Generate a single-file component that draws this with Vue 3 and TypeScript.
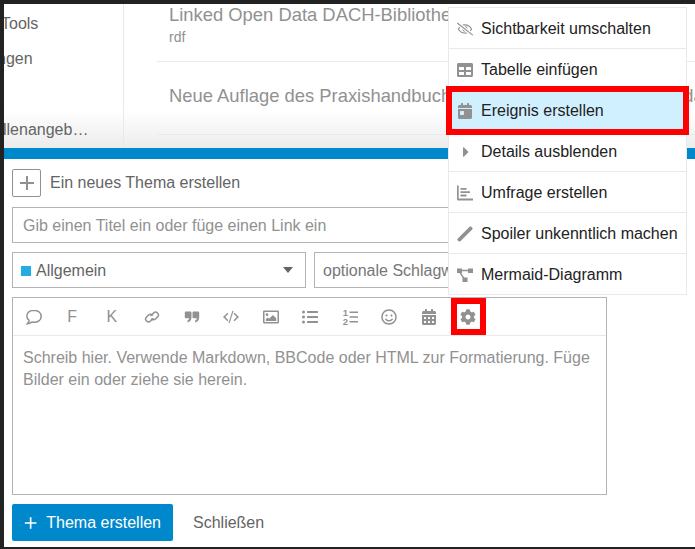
<script setup lang="ts">
import { h } from 'vue'
import type { FunctionalComponent } from 'vue'

interface Glyph {
  box: string
  d: string
  line?: boolean
  evenodd?: boolean
}

const icons: Record<string, Glyph> = {
  comment: { box: '0 0 16 16', line: true, d: 'M8 1.200C3.800 1.200.8 3.700.8 7c0 1.800.9 3.300 2.300 4.400-.2 1.200-.9 2.400-1.800 3.400 1.700-.1 3.300-.8 4.500-1.700.7.1 1.400.2 2.200.2 4.200 0 7.200-2.500 7.200-5.900S12.200 1.200 8 1.200z' },
  link: { box: '0 0 16 16', line: true, d: 'M7 6.500 9.500 4a2.800 2.800 0 0 1 4 4L11.500 10a2.800 2.800 0 0 1-4 0M9 9.500 6.500 12a2.800 2.800 0 0 1-4-4L4.500 6a2.800 2.800 0 0 1 4 0' },
  quote: { box: '0 0 16 16', d: 'M1.800 2.500h4.700a1 1 0 0 1 1 1v5c0 2.600-1.500 4.500-4 5v-2.200c1-.3 1.600-1 1.700-2H1.800a1 1 0 0 1-1-1V3.500a1 1 0 0 1 1-1zM9.500 2.500h4.700a1 1 0 0 1 1 1v5c0 2.600-1.500 4.500-4 5v-2.200c1-.3 1.600-1 1.700-2H9.500a1 1 0 0 1-1-1V3.500a1 1 0 0 1 1-1z' },
  code: { box: '0 0 16 16', d: 'M4.400 3.800l1 1L2.200 8l3.200 3.200-1 1L0 8zM11.600 3.800l-1 1L13.800 8l-3.200 3.200 1 1L16 8zM9.400 1.800l1.100.3-3.900 12.100-1.100-.3z' },
  image: { box: '0 0 16 16', evenodd: true, d: 'M1.200 1.500h13.600c.7 0 1.200.5 1.200 1.200v10.600c0 .7-.5 1.200-1.200 1.200H1.200C.5 14.500 0 14 0 13.300V2.700c0-.7.5-1.200 1.200-1.200zM1.500 3v10h13V3zM4 4.300a1.400 1.400 0 1 1 0 2.800 1.400 1.400 0 0 1 0-2.800zM2.800 12v-1.700l1.900-1.900 1.400 1.400 3.800-3.900 3.300 3.400V12z' },
  listUl: { box: '0 0 512 512', d: 'M48 48a48 48 0 1 0 48 48 48 48 0 0 0-48-48zm0 160a48 48 0 1 0 48 48 48 48 0 0 0-48-48zm0 160a48 48 0 1 0 48 48 48 48 0 0 0-48-48zm448 16H176a16 16 0 0 0-16 16v32a16 16 0 0 0 16 16h320a16 16 0 0 0 16-16v-32a16 16 0 0 0-16-16zm0-320H176a16 16 0 0 0-16 16v32a16 16 0 0 0 16 16h320a16 16 0 0 0 16-16V80a16 16 0 0 0-16-16zm0 160H176a16 16 0 0 0-16 16v32a16 16 0 0 0 16 16h320a16 16 0 0 0 16-16v-32a16 16 0 0 0-16-16z' },
  smile: { box: '0 0 496 512', d: 'M248 8C111 8 0 119 0 256s111 248 248 248 248-111 248-248S385 8 248 8zm0 448c-110.300 0-200-89.700-200-200S137.700 56 248 56s200 89.700 200 200-89.700 200-200 200zm-80-216c17.700 0 32-14.300 32-32s-14.300-32-32-32-32 14.300-32 32 14.300 32 32 32zm160 0c17.700 0 32-14.300 32-32s-14.300-32-32-32-32 14.300-32 32 14.300 32 32 32zm4 72.600c-20.800 25-51.500 39.400-84 39.400s-63.200-14.300-84-39.400c-8.500-10.200-23.700-11.500-33.800-3.100-10.200 8.500-11.500 23.600-3.100 33.800 30 36 74.100 56.600 120.900 56.600s90.900-20.600 120.900-56.600c8.500-10.200 7.100-25.300-3.100-33.800-10.100-8.400-25.300-7.100-33.800 3.100z' },
  calendar: { box: '0 0 448 512', d: 'M0 464c0 26.500 21.500 48 48 48h352c26.500 0 48-21.500 48-48V192H0v272zm320-196c0-6.600 5.400-12 12-12h40c6.600 0 12 5.400 12 12v40c0 6.600-5.400 12-12 12h-40c-6.600 0-12-5.400-12-12v-40zm0 128c0-6.600 5.400-12 12-12h40c6.600 0 12 5.400 12 12v40c0 6.600-5.400 12-12 12h-40c-6.600 0-12-5.400-12-12v-40zM192 268c0-6.600 5.400-12 12-12h40c6.600 0 12 5.400 12 12v40c0 6.600-5.400 12-12 12h-40c-6.600 0-12-5.400-12-12v-40zm0 128c0-6.600 5.400-12 12-12h40c6.600 0 12 5.400 12 12v40c0 6.600-5.400 12-12 12h-40c-6.600 0-12-5.400-12-12v-40zM64 268c0-6.600 5.400-12 12-12h40c6.600 0 12 5.400 12 12v40c0 6.600-5.400 12-12 12H76c-6.600 0-12-5.400-12-12v-40zm0 128c0-6.600 5.400-12 12-12h40c6.600 0 12 5.400 12 12v40c0 6.600-5.400 12-12 12H76c-6.600 0-12-5.400-12-12v-40zM400 64h-48V16c0-8.800-7.200-16-16-16h-32c-8.800 0-16 7.200-16 16v48H160V16c0-8.800-7.200-16-16-16h-32c-8.800 0-16 7.200-16 16v48H48C21.500 64 0 85.500 0 112v48h448v-48c0-26.500-21.500-48-48-48z' },
  cog: { box: '0 0 512 512', d: 'M487.400 315.700l-42.600-24.600c4.300-23.200 4.300-47 0-70.200l42.600-24.600c4.900-2.800 7.100-8.600 5.500-14-11.100-35.600-30-67.800-54.700-94.600-3.800-4.100-10-5.100-14.800-2.300L380.800 110c-17.900-15.400-38.500-27.300-60.800-35.100V25.800c0-5.600-3.900-10.500-9.400-11.700-36.700-8.200-74.300-7.800-109.200 0-5.500 1.200-9.400 6.100-9.400 11.700V75c-22.200 7.900-42.800 19.800-60.800 35.100L88.700 85.500c-4.900-2.800-11-1.900-14.800 2.300-24.700 26.700-43.600 58.900-54.700 94.600-1.700 5.400.6 11.200 5.500 14L67.300 221c-4.300 23.200-4.300 47 0 70.200l-42.600 24.600c-4.900 2.800-7.100 8.600-5.500 14 11.100 35.600 30 67.800 54.700 94.600 3.800 4.100 10 5.100 14.800 2.300l42.600-24.600c17.900 15.400 38.500 27.300 60.800 35.100v49.200c0 5.600 3.900 10.500 9.400 11.700 36.700 8.200 74.300 7.800 109.200 0 5.500-1.200 9.400-6.100 9.400-11.700v-49.200c22.200-7.900 42.800-19.800 60.800-35.100l42.600 24.600c4.900 2.800 11 1.900 14.800-2.300 24.700-26.700 43.600-58.900 54.700-94.600 1.500-5.500-.7-11.300-5.600-14.100zM256 336c-44.100 0-80-35.900-80-80s35.900-80 80-80 80 35.900 80 80-35.900 80-80 80z' },
  eyeSlash: { box: '0 0 640 512', d: 'M634 471L36 3.510A16 16 0 0 0 13.510 6l-10 12.490A16 16 0 0 0 6 41l598 467.490a16 16 0 0 0 22.490-2.490l10-12.490A16 16 0 0 0 634 471zM296.790 146.470l134.790 105.380C429.360 191.910 380.480 144 320 144a112.260 112.260 0 0 0-23.210 2.470zm46.420 219.070L208.420 260.160C210.650 320.090 259.530 368 320 368a113 113 0 0 0 23.210-2.460zM320 112c98.650 0 189.090 55 237.930 144a285.530 285.530 0 0 1-44 60.200l37.740 29.500a333.700 333.700 0 0 0 52.900-75.110 32.350 32.350 0 0 0 0-29.190C550.290 135.590 442.930 64 320 64c-36.700 0-71.710 7-104.630 18.810l46.410 36.290c18.940-4.300 38.340-7.100 58.220-7.100zm0 288c-98.650 0-189.080-55-237.930-144a285.470 285.470 0 0 1 44.050-60.190l-37.740-29.500a333.600 333.600 0 0 0-52.890 75.100 32.350 32.350 0 0 0 0 29.190C89.720 376.410 197.080 448 320 448c36.700 0 71.710-7.050 104.630-18.810l-46.410-36.280C359.280 397.200 339.890 400 320 400z' },
  table: { box: '0 0 512 512', d: 'M464 32H48C21.490 32 0 53.490 0 80v352c0 26.510 21.490 48 48 48h416c26.510 0 48-21.490 48-48V80c0-26.510-21.490-48-48-48zM224 416H64v-96h160v96zm0-160H64v-96h160v96zm224 160H288v-96h160v96zm0-160H288v-96h160v96z' },
  calendarDay: { box: '0 0 448 512', d: 'M0 464c0 26.500 21.500 48 48 48h352c26.500 0 48-21.500 48-48V192H0v272zm64-192c0-8.800 7.200-16 16-16h96c8.800 0 16 7.200 16 16v96c0 8.800-7.200 16-16 16H80c-8.800 0-16-7.200-16-16v-96zM400 64h-48V16c0-8.800-7.200-16-16-16h-32c-8.800 0-16 7.200-16 16v48H160V16c0-8.800-7.200-16-16-16h-32c-8.800 0-16 7.200-16 16v48H48C21.500 64 0 85.500 0 112v48h448v-48c0-26.500-21.500-48-48-48z' },
  caretRight: { box: '-32 0 192 512', d: 'M0 384.662V127.338c0-17.818 21.543-26.741 34.142-14.142l128.662 128.662c7.810 7.810 7.810 20.474 0 28.284L34.142 398.804C21.543 411.404 0 402.480 0 384.662z' },
  poll: { box: '0 0 16 16', d: 'M0 .5h1.700v13.100H16v1.800H1a1 1 0 0 1-1-1zM3.500 3h6v1.800h-6zM3.500 6.300h9.500v1.800H3.500zM3.500 9.600h6v1.800h-6z' },
  pen: { box: '0 0 16 16', d: 'M12.600.8c.5-.5 1.300-.5 1.800 0l.8.8c.5.5.5 1.300 0 1.800L3.400 15.200c-.5.5-1.300.5-1.800 0l-.8-.8c-.5-.5-.5-1.300 0-1.800z' },
  diagram: { box: '0 0 16 16', d: 'M0 1.500h5v1.200h6V1.500h5V6h-5V4.300H5V6H4.200l3 4.500h3.300V15h-5v-4.200L2.500 6H0z' },
}

const Ico: FunctionalComponent<{ name: string }> = ({ name }) => {
  const g = icons[name]
  return h('svg', { viewBox: g.box, class: ['ico', { line: g.line }] }, [
    h('path', { d: g.d, 'fill-rule': g.evenodd ? 'evenodd' : 'nonzero' }),
  ])
}
Ico.props = ['name']

const menuItems = [
  { label: 'Sichtbarkeit umschalten', icon: 'eyeSlash' },
  { label: 'Tabelle einfügen', icon: 'table' },
  { label: 'Ereignis erstellen', icon: 'calendarDay', highlight: true },
  { label: 'Details ausblenden', icon: 'caretRight' },
  { label: 'Umfrage erstellen', icon: 'poll' },
  { label: 'Spoiler unkenntlich machen', icon: 'pen' },
  { label: 'Mermaid-Diagramm', icon: 'diagram' },
]

const sideItems = [
  { text: 'Tools', shift: -3 },
  { text: 'ngen', shift: -7 },
  { text: '', shift: 0 },
  { text: 'llenangeb…', shift: -1 },
]

const toolsBefore = ['comment', 'F', 'K', 'link', 'quote', 'code', 'image', 'listUl']
const toolsAfter = ['smile', 'calendar']
</script>

<template>
  <div class="page">
    <div class="stream">
      <aside class="side">
        <div v-for="(s, i) in sideItems" :key="i" class="side-item">
          <span :style="{ marginLeft: s.shift + 'px' }">{{ s.text }}</span>
        </div>
      </aside>
      <div class="list">
        <div class="row first">
          <div class="row-title">Linked Open Data DACH-Bibliotheken und Forschung</div>
          <div class="row-tag">rdf</div>
        </div>
        <div class="row second">
          <div class="row-title">Neue Auflage des Praxishandbuchs Forschungsdaten mit Metadaten</div>
        </div>
      </div>
    </div>
    <div class="grip"></div>
    <div class="composer">
      <div class="head">
        <span class="plus-box">
          <svg viewBox="0 0 16 16" width="16" height="16"><path d="M8 1v14M1 8h14" stroke="#919191" stroke-width="2" fill="none" /></svg>
        </span>
        <span class="head-text">Ein neues Thema erstellen</span>
      </div>
      <div class="title-input">Gib einen Titel ein oder füge einen Link ein</div>
      <div class="meta">
        <div class="category">
          <span class="swatch"></span>
          <span class="cat-name">Allgemein</span>
          <span class="caret"></span>
        </div>
        <div class="tags">optionale Schlagwörter</div>
      </div>
      <div class="editor">
        <div class="toolbar">
          <span v-for="t in toolsBefore" :key="t" class="tool" :class="{ letter: !icons[t] }">
            <Ico v-if="icons[t]" :name="t" />
            <template v-else>{{ t }}</template>
          </span>
          <span class="tool">
            <svg viewBox="0 0 16 16" class="ico">
              <path d="M7.500 2.500H16v1.500H7.500zM7.500 7.300H16v1.500H7.500zM7.500 12.100H16v1.500H7.500z" />
              <text x="0.800" y="7.300" class="num">1</text>
              <text x="0.800" y="15.800" class="num">2</text>
            </svg>
          </span>
          <span v-for="t in toolsAfter" :key="t" class="tool">
            <Ico :name="t" />
          </span>
          <span class="tool gear">
            <Ico name="cog" />
          </span>
        </div>
        <div class="editor-body">Schreib hier. Verwende Markdown, BBCode oder HTML zur Formatierung. Füge Bilder ein oder ziehe sie herein.</div>
      </div>
      <div class="actions">
        <button class="create">
          <svg viewBox="0 0 16 16" width="14" height="14"><path d="M8 1v14M1 8h14" stroke="#fff" stroke-width="2" fill="none" /></svg>
          Thema erstellen
        </button>
        <span class="close">Schließen</span>
      </div>
    </div>

    <ul class="menu">
      <li v-for="item in menuItems" :key="item.label" class="menu-item" :class="{ highlight: item.highlight }">
        <Ico :name="item.icon" />
        <span>{{ item.label }}</span>
      </li>
    </ul>
  </div>
</template>

<style>
html,
body {
  margin: 0;
  background: #222;
}
</style>

<style scoped>
.page {
  position: relative;
  box-sizing: border-box;
  width: 695px;
  height: 549px;
  padding: 4px 0 2px 4px;
  background: #222;
  display: flex;
  flex-direction: column;
  overflow: hidden;
  font-family: "Liberation Sans", Arial, sans-serif;
  font-size: 16px;
  color: #222;
}

.stream {
  height: 144px;
  flex: none;
  display: flex;
  background: linear-gradient(to bottom, #fff 74%, #ececec);
  overflow: hidden;
}

.side {
  width: 119px;
  flex: none;
  border-right: 1px solid #e9e9e9;
  padding-top: 9px;
  color: #646464;
}

.side-item {
  height: 35.400px;
  line-height: 21px;
  white-space: nowrap;
  overflow: hidden;
}

.side-item span {
  display: inline-block;
}

.list {
  flex: 1;
  min-width: 0;
  padding-left: 33px;
}

.row {
  box-sizing: border-box;
  padding-left: 12px;
  border-bottom: 1px solid #e9e9e9;
  color: #919191;
  white-space: nowrap;
  overflow: hidden;
}

.first {
  height: 58px;
}

.second {
  height: 73px;
  padding-top: 23px;
}

.row-title {
  font-size: 18.400px;
  line-height: 22px;
}

.row-tag {
  font-size: 14px;
  line-height: 20px;
  margin-top: 1px;
}

.grip {
  height: 11px;
  flex: none;
  background: #0088cc;
}

.composer {
  flex: 1;
  background: #fff;
  padding: 10px 88px 0 8px;
  display: flex;
  flex-direction: column;
}

.head {
  display: flex;
  align-items: center;
  height: 28px;
  gap: 9px;
  color: #646464;
}

.plus-box {
  box-sizing: border-box;
  width: 29px;
  height: 28px;
  border: 1px solid #919191;
  border-radius: 2px;
  display: flex;
  align-items: center;
  justify-content: center;
}

.title-input {
  box-sizing: border-box;
  height: 36px;
  margin-top: 10px;
  padding: 1px 10px 0;
  border: 1px solid #b3b3b3;
  line-height: 34px;
  color: #919191;
}

.meta {
  display: flex;
  gap: 8px;
  margin-top: 9px;
  height: 36px;
}

.category {
  box-sizing: border-box;
  width: 294px;
  border: 1px solid #b3b3b3;
  display: flex;
  align-items: center;
  padding: 1px 12px 0 8px;
  color: #646464;
}

.swatch {
  width: 10px;
  height: 10px;
  margin-right: 5px;
  background: #25aae1;
}

.cat-name {
  flex: 1;
}

.caret {
  width: 0;
  height: 0;
  margin-top: -1px;
  border-left: 5.500px solid transparent;
  border-right: 5.500px solid transparent;
  border-top: 6px solid #646464;
}

.tags {
  flex: 1;
  min-width: 0;
  box-sizing: border-box;
  border: 1px solid #b3b3b3;
  padding: 1px 8px 0;
  line-height: 34px;
  color: #777;
  white-space: nowrap;
  overflow: hidden;
}

.editor {
  box-sizing: border-box;
  height: 198px;
  margin-top: 9px;
  border: 1px solid #b3b3b3;
}

.toolbar {
  height: 37px;
  border-bottom: 1px solid #e9e9e9;
  display: flex;
  padding-left: 1px;
}

.tool {
  box-sizing: border-box;
  width: 39.500px;
  flex: none;
  display: flex;
  align-items: center;
  justify-content: center;
  color: #919191;
}

.letter {
  padding-right: 2px;
}

.gear {
  width: 35px;
  margin-left: 2px;
  outline: 6px solid #f00;
  outline-offset: -6px;
}

.ico {
  width: 16px;
  height: 16px;
  flex: none;
  fill: #919191;
}

.ico.line {
  fill: none;
  stroke: #919191;
  stroke-width: 1.500;
  stroke-linecap: round;
}

.num {
  font-size: 9.500px;
  font-weight: 700;
}

.editor-body {
  padding: 11px 10px;
  line-height: 22px;
  color: #919191;
}

.actions {
  display: flex;
  align-items: center;
  margin-top: 9px;
  gap: 20px;
}

.create {
  box-sizing: border-box;
  width: 161px;
  height: 37px;
  border: 0;
  border-radius: 2px;
  background: #0088cc;
  color: #fff;
  font: inherit;
  white-space: nowrap;
  display: flex;
  align-items: center;
  gap: 9px;
  padding: 0 12px;
}

.close {
  color: #646464;
}

.menu {
  position: absolute;
  left: 448px;
  top: 7px;
  width: 239px;
  box-sizing: border-box;
  margin: 0;
  padding: 0;
  list-style: none;
  background: #fff;
  border: 1px solid #e9e9e9;
}

.menu-item {
  height: 41px;
  box-sizing: border-box;
  display: flex;
  align-items: center;
  gap: 8px;
  padding: 2px 0 0 8px;
  border-bottom: 1px solid #e9e9e9;
  white-space: nowrap;
}

.menu-item:last-child {
  height: 40px;
  border-bottom: 0;
}

.menu-item.highlight {
  position: relative;
  background: #d1f0ff;
}

.menu-item.highlight::after {
  content: "";
  position: absolute;
  top: -4px;
  bottom: -5px;
  left: -3px;
  right: -3px;
  border: 6px solid #f00;
}
</style>
